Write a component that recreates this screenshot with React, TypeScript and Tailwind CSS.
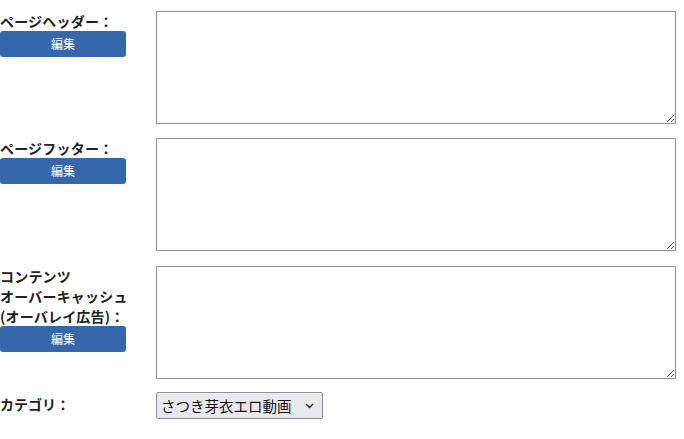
const font = "font-['Noto_Sans_CJK_JP','Noto_Sans',sans-serif]";

const rows = [
  { id: "header", label: ["ページヘッダー："] },
  { id: "footer", label: ["ページフッター："] },
  { id: "overlay", label: ["コンテンツ", "オーバーキャッシュ", "(オーバレイ広告)："] },
];

function EditButton() {
  return (
    <button
      type="button"
      className="block w-[126px] h-[26px] rounded-[3px] bg-[#3467ac] text-white text-[12px] leading-[26px] text-center"
    >
      編集
    </button>
  );
}

export default function App() {
  return (
    <div className={`${font} bg-white w-[684px] h-[439px] overflow-hidden text-[#222]`}>
      <div className="pt-[11px] flex flex-col">
        {rows.map((r, i) => (
          <div key={r.id} className={`flex ${i === 0 ? "" : i === 1 ? "mt-[14px]" : "mt-[15px]"}`}>
            <div className="w-[156px] shrink-0">
              <div className="text-[14px] font-bold leading-[20px] tracking-[0.2px]">
                {r.label.map((l) => (
                  <div key={l}>{l}</div>
                ))}
              </div>
              <EditButton />
            </div>
            <textarea className="w-[520px] h-[113px] border border-[#8f8f9d] bg-white resize-both block" />
          </div>
        ))}
        <div className="flex mt-[13px]">
          <div className="w-[156px] shrink-0 text-[14px] font-bold leading-[20px] pt-[2px]">カテゴリ：</div>
          <div className="w-[167px] h-[27px] border border-[#8f8f9d] bg-[#e9e9ed] flex items-center justify-between pl-[4px] pr-[8px] rounded-[2px]">
            <span className="text-[14.5px] text-[#111]">さつき芽衣エロ動画</span>
            <svg width="9" height="6" viewBox="0 0 9 6" fill="none">
              <path d="M1 1l3.5 3.5L8 1" stroke="#222" strokeWidth="1.4" />
            </svg>
          </div>
        </div>
      </div>
    </div>
  );
}
